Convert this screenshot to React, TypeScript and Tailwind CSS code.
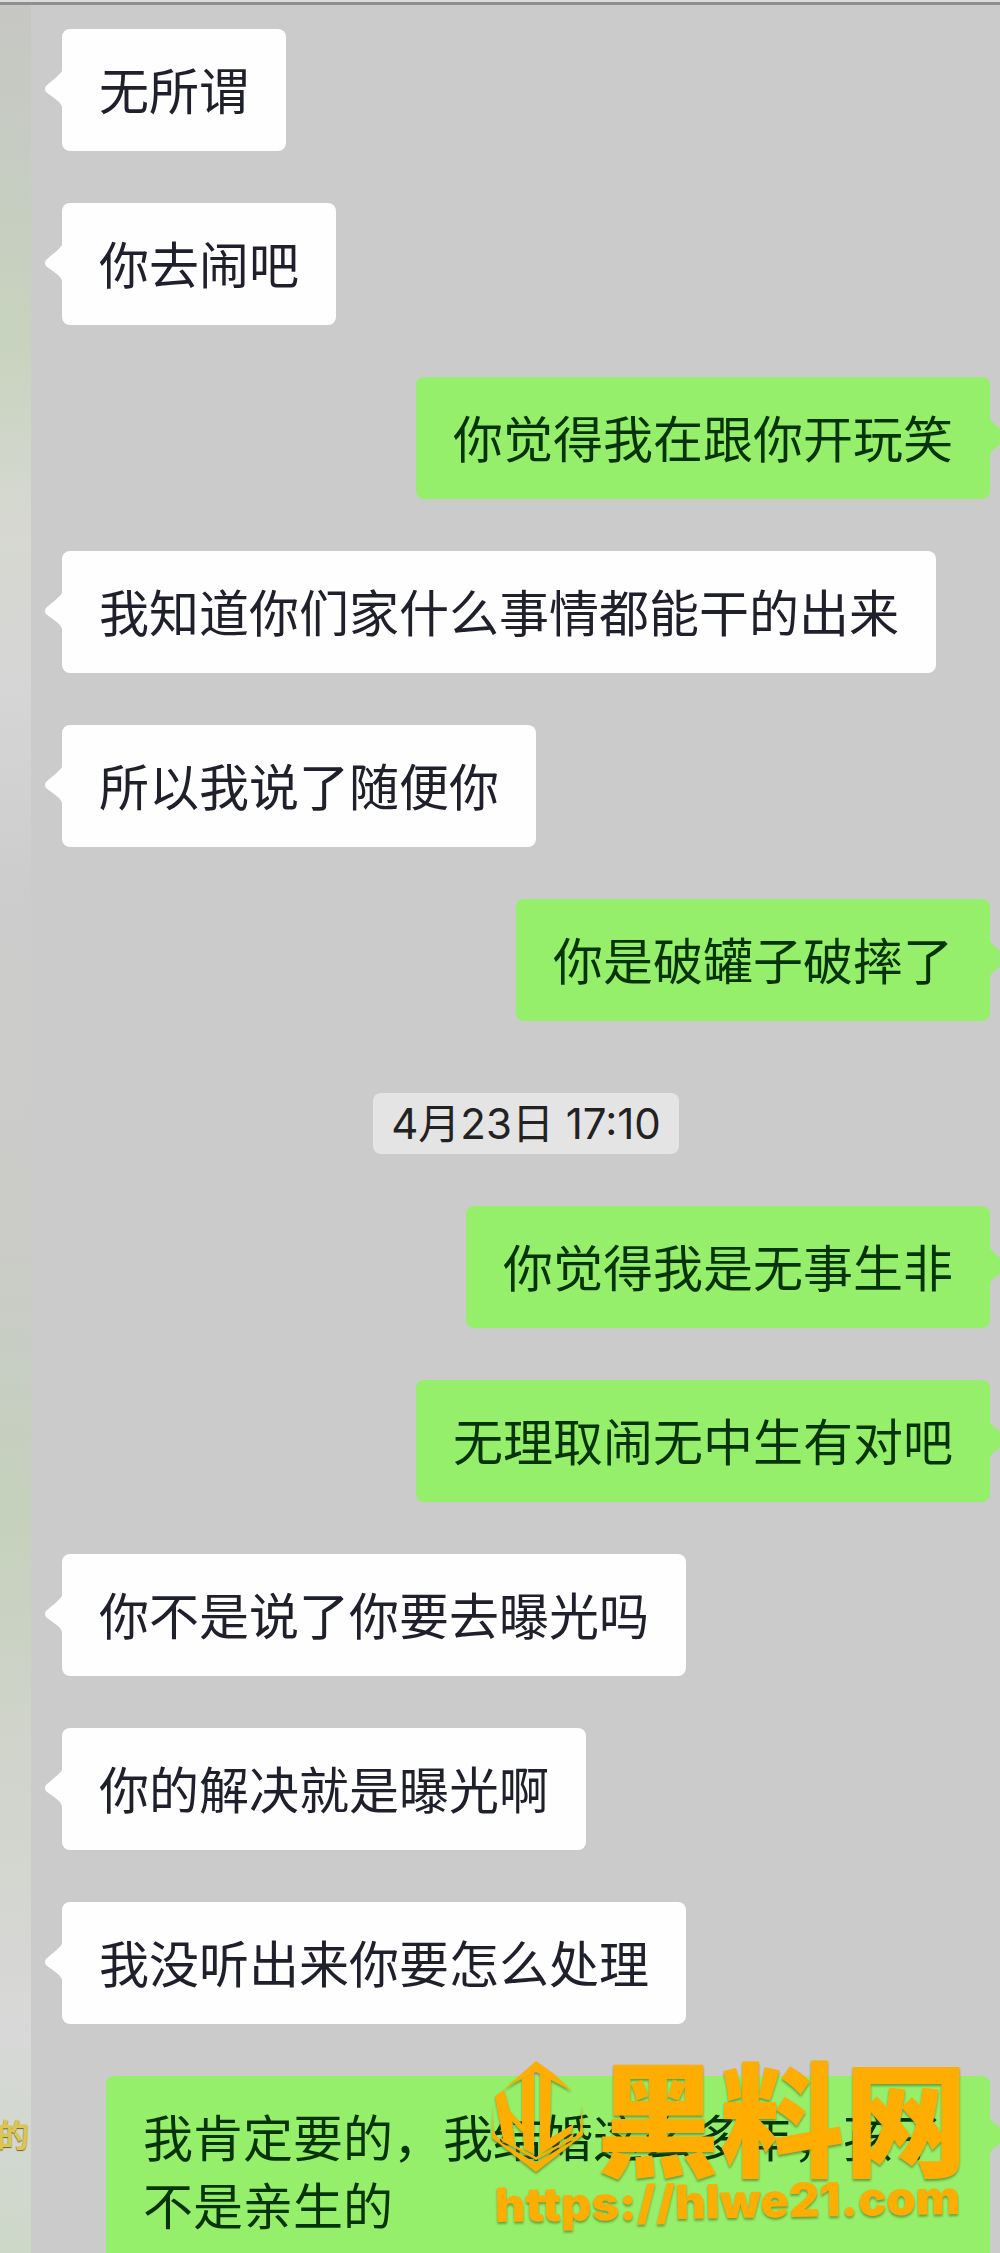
import React from 'react';
import clsx from 'clsx';

type Item =
  | { kind: 'in' | 'out'; text: string }
  | { kind: 'time'; text: string };

const items: Item[] = [
  { kind: 'in', text: '无所谓' },
  { kind: 'in', text: '你去闹吧' },
  { kind: 'out', text: '你觉得我在跟你开玩笑' },
  { kind: 'in', text: '我知道你们家什么事情都能干的出来' },
  { kind: 'in', text: '所以我说了随便你' },
  { kind: 'out', text: '你是破罐子破摔了' },
  { kind: 'time', text: '4月23日 17:10' },
  { kind: 'out', text: '你觉得我是无事生非' },
  { kind: 'out', text: '无理取闹无中生有对吧' },
  { kind: 'in', text: '你不是说了你要去曝光吗' },
  { kind: 'in', text: '你的解决就是曝光啊' },
  { kind: 'in', text: '我没听出来你要怎么处理' },
  { kind: 'out', text: '我肯定要的，我结婚这么多年，孩子不是亲生的' },
];

const Bubble: React.FC<{ text: string; mine: boolean }> = ({ text, mine }) => (
  <div className={clsx('flex shrink-0', mine ? 'justify-end' : 'justify-start')}>
    <div
      className={clsx(
        'relative max-w-[884px] rounded-lg px-[37px] pt-[25px] pb-[29px] text-[50px] leading-[68px]',
        mine ? 'bg-[#95ef6b] text-[#06330a]' : 'bg-[#fefefe] text-[#20202c]',
      )}
    >
      {text}
      {/* 气泡尖角 */}
      <svg
        viewBox="0 0 18 36"
        className={clsx(
          'absolute top-[42px] h-9 w-[18px]',
          mine ? 'left-full -scale-x-100 text-[#95ef6b]' : 'right-full text-[#fefefe]',
        )}
        fill="currentColor"
        aria-hidden="true"
      >
        <path d="M18 0C16 4 5 12 2 15Q0 18 2 21C5 24 17 30 18 36Z" />
      </svg>
    </div>
  </div>
);

const Watermark = () => (
  <div className="absolute right-8 bottom-6 flex flex-col items-end text-[#ffae00] drop-shadow-[0_2px_1px_rgba(70,110,30,0.6)]">
    <div className="flex items-center gap-3">
      <svg viewBox="0 0 92 112" className="h-[112px] w-[92px]" fill="currentColor" aria-hidden="true">
        <path d="M44 0 62 13 80 30 44 11 22 22 10 30Z" />
        <path d="M3 35 12 29 18 50 30 63V18L42 12V93L32 88 31 72 20 60 23 85 11 78Z" />
        <path d="M48 13 59 18 58 77 82 63 79 72 48 94Z" />
        <path d="M0 42 1 70 10 82 44 102 80 80 88 70 90 44 91 74 44 111 0 77Z" />
        <path d="M8 76 44 96 70 82 82 72 80 79 44 99 10 80Z" />
      </svg>
      <span className="-mt-2 font-['Noto_Sans_CJK_SC',sans-serif] text-[124px] leading-[112px] font-black">
        黑料网
      </span>
    </div>
    <a
      href="https://hlwe21.com"
      className="mr-2 -rotate-1 font-['Inter',sans-serif] text-[47px] leading-[56px] font-black"
    >
      https://hlwe21.com
    </a>
  </div>
);

export default function App() {
  return (
    <div className="relative flex h-screen overflow-hidden bg-[#cbcbcb] font-['Noto_Sans_CJK_SC',sans-serif]">
      {/* 左侧露出的背景 */}
      <aside className="flex w-[31px] shrink-0 flex-col justify-end overflow-hidden bg-[linear-gradient(#c6c6c4,#c7d3be_15%,#d6d8d0_23%,#d6d6d6_30%,#cccccc_40%,#cbcbc8_55%,#c4d1bc_67%,#cfd3c8_76%,#d8d8d8_90%,#ccd8c8)] pb-[100px]">
        <span className="mr-[2px] self-end text-[32px] leading-10 font-bold text-[#dcc650] text-shadow-[0_1px_1px_#6f6430]">
          的
        </span>
      </aside>

      <main className="flex min-w-0 flex-1 flex-col gap-[52px] pt-[29px] pr-[10px] pl-[31px]">
        {items.map((item, i) =>
          item.kind === 'time' ? (
            <time
              key={i}
              className="mt-5 shrink-0 self-center rounded-lg bg-[#e4e4e4] px-[18px] font-['Inter','Noto_Sans_CJK_SC',sans-serif] text-[42px] leading-[61px] text-[#222]"
            >
              {item.text}
            </time>
          ) : (
            <Bubble key={i} text={item.text} mine={item.kind === 'out'} />
          ),
        )}
      </main>

      <div className="absolute inset-x-0 top-0 h-[5px] border-b-[3px] border-[#8e8e8e] bg-[#dcdcdc]" />
      <Watermark />
    </div>
  );
}
